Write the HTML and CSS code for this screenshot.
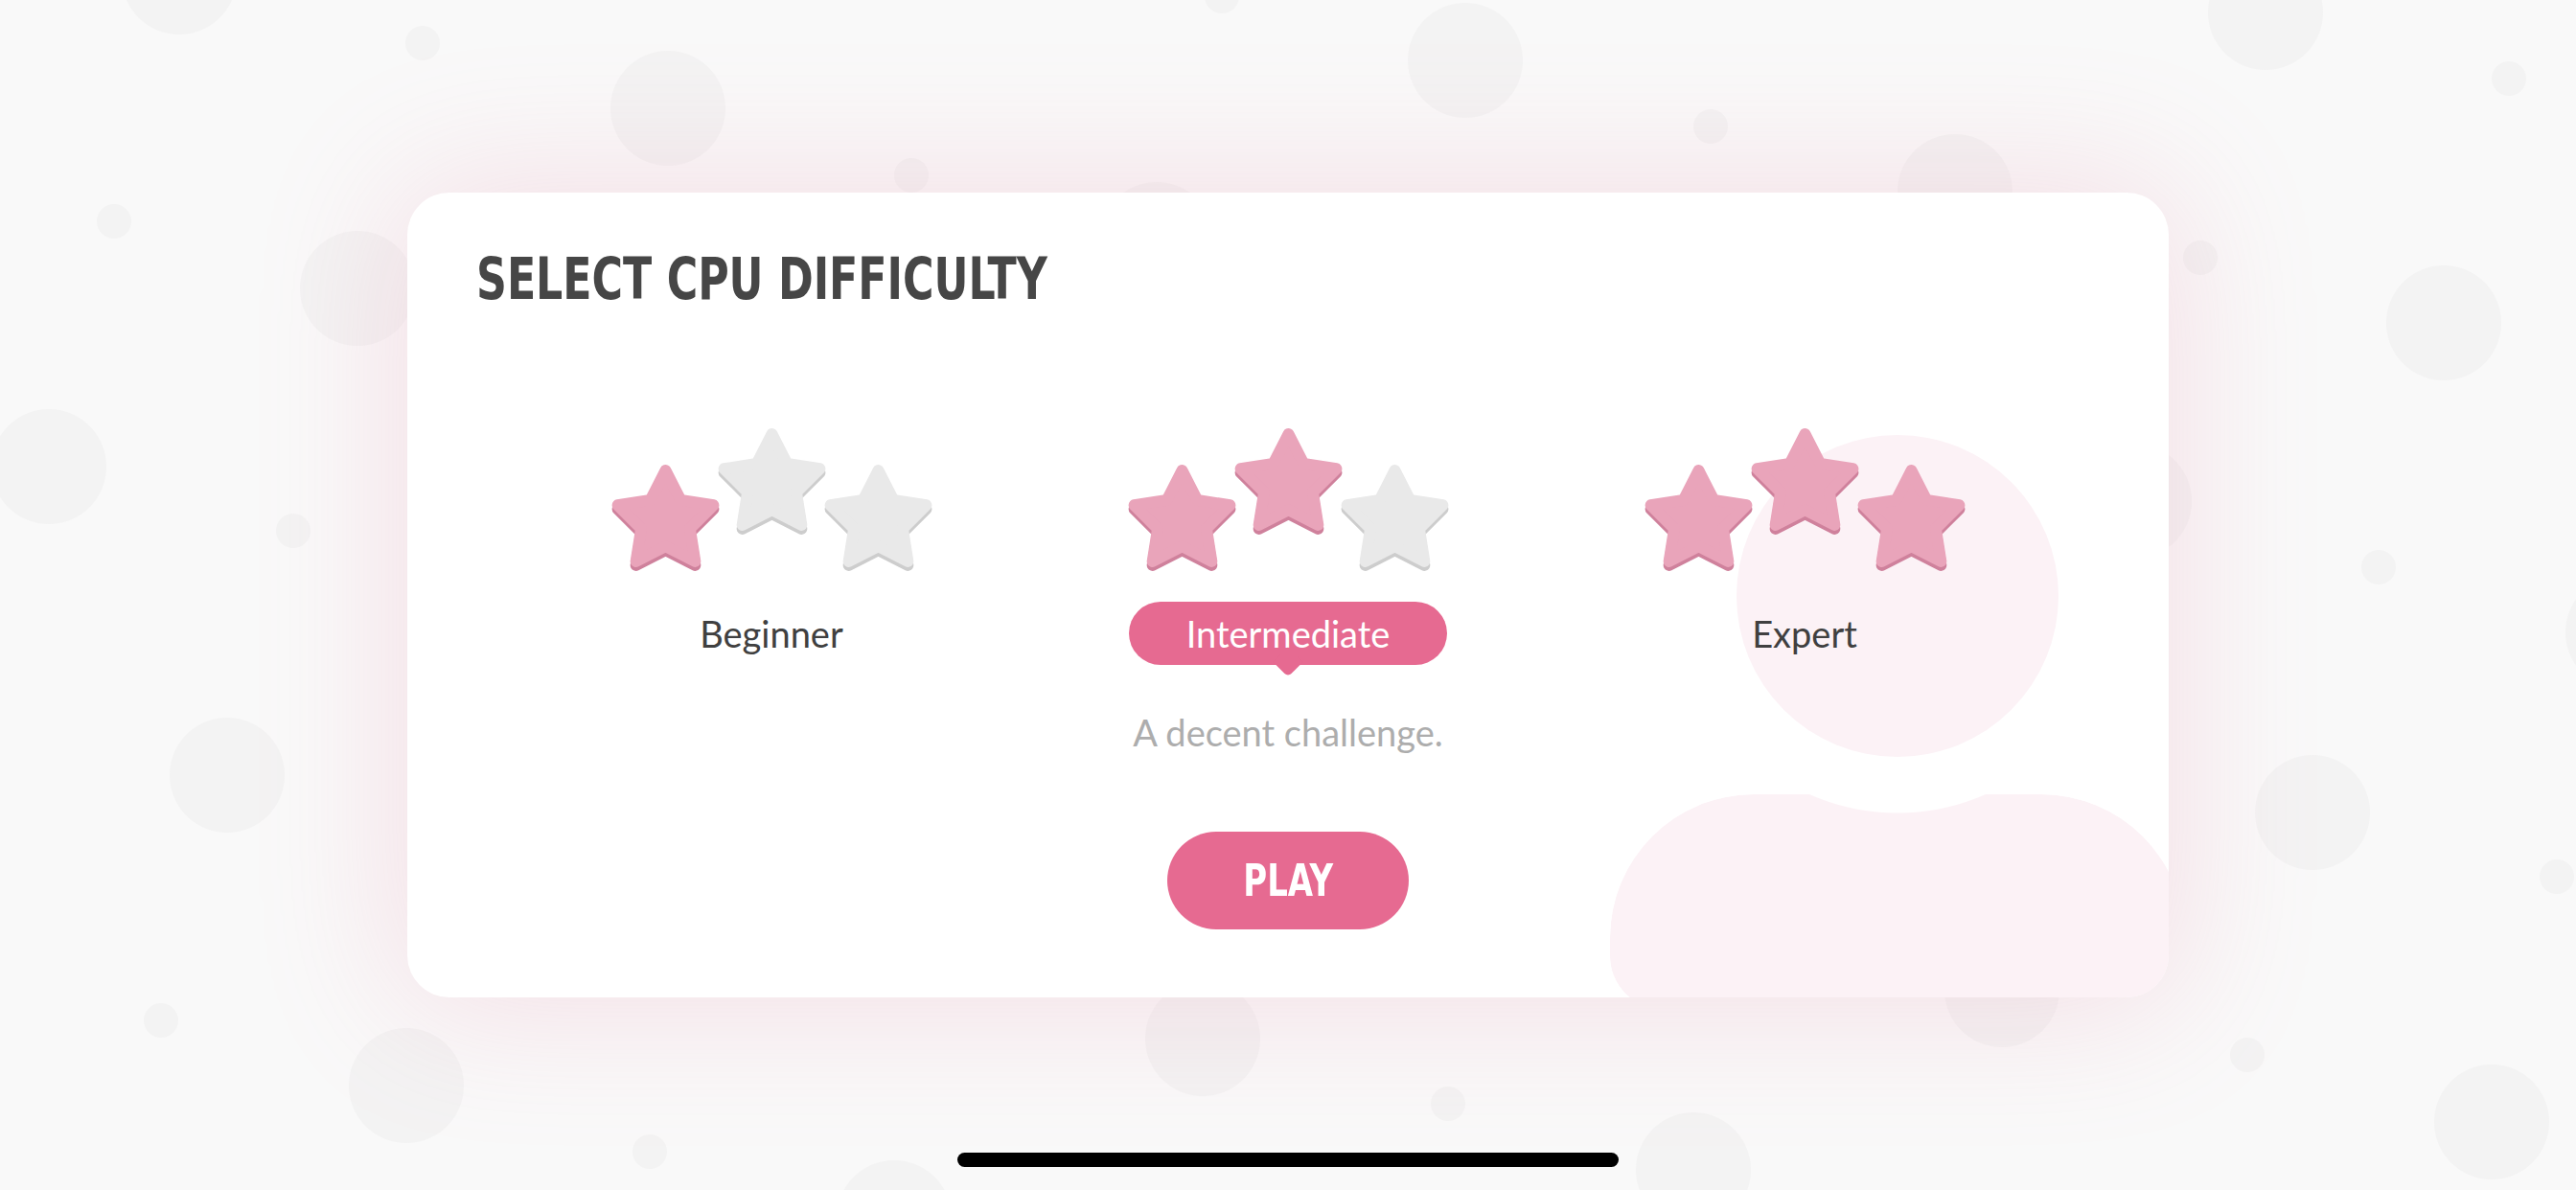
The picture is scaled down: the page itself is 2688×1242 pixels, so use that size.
FILE: index.html
```html
<!DOCTYPE html>
<html lang="en">
<head>
<meta charset="utf-8">
<title>Select CPU Difficulty</title>
<link rel="stylesheet" href="styles.css">
</head>
<body>
<svg class="defs" width="0" height="0" aria-hidden="true">
  <defs>
    <polygon id="starShape" points="57,7 72.87,38.16 107.41,43.62 82.68,68.34 88.15,102.88 57,87 25.85,102.88 31.32,68.34 6.59,43.62 41.13,38.16"/>
  </defs>
</svg>
<main class="card">
  <div class="deco-head"></div>
  <div class="deco-body"></div>
  <div class="content">
    <h1 class="title"><span class="narrow">SELECT CPU DIFFICULTY</span></h1>
    <div class="options">
      <div class="option">
        <div class="stars">
          <svg class="star on" viewBox="0 0 114 113"><use href="#starShape" class="sh" transform="translate(0,4)"/><use href="#starShape" class="fg"/></svg>
          <svg class="star off mid" viewBox="0 0 114 113"><use href="#starShape" class="sh" transform="translate(0,4)"/><use href="#starShape" class="fg"/></svg>
          <svg class="star off" viewBox="0 0 114 113"><use href="#starShape" class="sh" transform="translate(0,4)"/><use href="#starShape" class="fg"/></svg>
        </div>
        <div class="label">Beginner</div>
      </div>
      <div class="option">
        <div class="stars">
          <svg class="star on" viewBox="0 0 114 113"><use href="#starShape" class="sh" transform="translate(0,4)"/><use href="#starShape" class="fg"/></svg>
          <svg class="star on mid" viewBox="0 0 114 113"><use href="#starShape" class="sh" transform="translate(0,4)"/><use href="#starShape" class="fg"/></svg>
          <svg class="star off" viewBox="0 0 114 113"><use href="#starShape" class="sh" transform="translate(0,4)"/><use href="#starShape" class="fg"/></svg>
        </div>
        <div class="label selected">Intermediate</div>
      </div>
      <div class="option">
        <div class="stars">
          <svg class="star on" viewBox="0 0 114 113"><use href="#starShape" class="sh" transform="translate(0,4)"/><use href="#starShape" class="fg"/></svg>
          <svg class="star on mid" viewBox="0 0 114 113"><use href="#starShape" class="sh" transform="translate(0,4)"/><use href="#starShape" class="fg"/></svg>
          <svg class="star on" viewBox="0 0 114 113"><use href="#starShape" class="sh" transform="translate(0,4)"/><use href="#starShape" class="fg"/></svg>
        </div>
        <div class="label">Expert</div>
      </div>
    </div>
    <p class="desc">A decent challenge.</p>
    <div class="actions">
      <button class="play" type="button"><span class="narrow">PLAY</span></button>
    </div>
  </div>
</main>
<div class="home-indicator"></div>
</body>
</html>
```
FILE: styles.css
```css
html, body {
  margin: 0;
  padding: 0;
}

body {
  width: 2688px;
  height: 1242px;
  overflow: hidden;
  position: relative;
  display: flex;
  align-items: center;
  justify-content: center;
  font-family: "Lato", "Open Sans", sans-serif;
  background-color: #f9f9f9;
  background-image:
    radial-gradient(circle at 187px -24px, #f3f3f3 59.5px, transparent 60.5px),
    radial-gradient(circle at 373px 301px, #f3f3f3 59.5px, transparent 60.5px),
    radial-gradient(circle at 51px 487px, #f3f3f3 59.5px, transparent 60.5px),
    radial-gradient(circle at 237px 809px, #f3f3f3 59.5px, transparent 60.5px),
    radial-gradient(circle at 424px 1133px, #f3f3f3 59.5px, transparent 60.5px),
    radial-gradient(circle at 697px 113px, #f3f3f3 59.5px, transparent 60.5px),
    radial-gradient(circle at 1529px 63px, #f3f3f3 59.5px, transparent 60.5px),
    radial-gradient(circle at 1207px 250px, #f3f3f3 59.5px, transparent 60.5px),
    radial-gradient(circle at 2040px 200px, #f3f3f3 59.5px, transparent 60.5px),
    radial-gradient(circle at 2364px 13px, #f3f3f3 59.5px, transparent 60.5px),
    radial-gradient(circle at 2550px 337px, #f3f3f3 59.5px, transparent 60.5px),
    radial-gradient(circle at 2227px 523px, #f3f3f3 59.5px, transparent 60.5px),
    radial-gradient(circle at 2737px 660px, #f3f3f3 59.5px, transparent 60.5px),
    radial-gradient(circle at 2413px 848px, #f3f3f3 59.5px, transparent 60.5px),
    radial-gradient(circle at 2600px 1171px, #f3f3f3 59.5px, transparent 60.5px),
    radial-gradient(circle at 1255px 1084px, #f3f3f3 59.5px, transparent 60.5px),
    radial-gradient(circle at 2089px 1033px, #f3f3f3 59.5px, transparent 60.5px),
    radial-gradient(circle at 933px 1271px, #f3f3f3 59.5px, transparent 60.5px),
    radial-gradient(circle at 1767px 1221px, #f3f3f3 59.5px, transparent 60.5px),
    radial-gradient(circle at 119px 231px, #f3f3f3 17.5px, transparent 18.5px),
    radial-gradient(circle at 306px 554px, #f3f3f3 17.5px, transparent 18.5px),
    radial-gradient(circle at 168px 1065px, #f3f3f3 17.5px, transparent 18.5px),
    radial-gradient(circle at 441px 45px, #f3f3f3 17.5px, transparent 18.5px),
    radial-gradient(circle at 1275px -4px, #f3f3f3 17.5px, transparent 18.5px),
    radial-gradient(circle at 1785px 132px, #f3f3f3 17.5px, transparent 18.5px),
    radial-gradient(circle at 951px 183px, #f3f3f3 17.5px, transparent 18.5px),
    radial-gradient(circle at 2618px 82px, #f3f3f3 17.5px, transparent 18.5px),
    radial-gradient(circle at 2296px 269px, #f3f3f3 17.5px, transparent 18.5px),
    radial-gradient(circle at 2482px 592px, #f3f3f3 17.5px, transparent 18.5px),
    radial-gradient(circle at 2668px 915px, #f3f3f3 17.5px, transparent 18.5px),
    radial-gradient(circle at 2345px 1101px, #f3f3f3 17.5px, transparent 18.5px),
    radial-gradient(circle at 1511px 1152px, #f3f3f3 17.5px, transparent 18.5px),
    radial-gradient(circle at 678px 1202px, #f3f3f3 17.5px, transparent 18.5px);
}

.defs {
  position: absolute;
  width: 0;
  height: 0;
  overflow: hidden;
}

.card {
  position: relative;
  box-sizing: border-box;
  width: 1838px;
  height: 840px;
  padding: 60px 72px 0;
  background: #ffffff;
  border-radius: 44px;
  overflow: hidden;
  box-shadow: 0 0 150px 10px rgba(232, 120, 156, 0.2);
}

.deco-head {
  position: absolute;
  left: 1387px;
  top: 253px;
  width: 336px;
  height: 336px;
  border-radius: 50%;
  background: #fcf2f6;
}

.deco-body {
  position: absolute;
  left: 1255px;
  top: 628px;
  width: 600px;
  height: 224px;
  border-radius: 150px 150px 55px 55px;
  background: #fcf2f6;
  -webkit-mask-image: radial-gradient(circle at 300px -207px, transparent 226px, #000 227px);
  mask-image: radial-gradient(circle at 300px -207px, transparent 226px, #000 227px);
}

.content {
  position: relative;
}

.narrow {
  display: inline-block;
  transform: scaleX(0.82);
}

.title {
  margin: 0;
  font-family: "Liberation Sans Narrow", "DejaVu Sans Condensed", "Liberation Sans", sans-serif;
  font-weight: 700;
  font-size: 60px;
  line-height: 60px;
  color: #464646;
  white-space: nowrap;
}

.title .narrow {
  transform-origin: 0 50%;
}

.options {
  display: grid;
  grid-template-columns: repeat(3, 539px);
  justify-content: center;
  margin-top: 125px;
}

.option {
  display: flex;
  flex-direction: column;
  align-items: center;
}

.stars {
  display: flex;
  align-items: flex-start;
  height: 149px;
}

.star {
  width: 113px;
  height: 112px;
  margin: 38px -1px 0;
  display: block;
}

.star.mid {
  margin-top: 0;
}

.star use {
  stroke-width: 12;
  stroke-linejoin: round;
}

.star.on .sh { fill: #cf819c; stroke: #cf819c; }
.star.on .fg { fill: #e9a4ba; stroke: #e9a4ba; }
.star.off .sh { fill: #cdcdcd; stroke: #cdcdcd; }
.star.off .fg { fill: #e9e9e9; stroke: #e9e9e9; }

.label {
  position: relative;
  margin-top: 33px;
  height: 66px;
  line-height: 66px;
  padding: 0 60px;
  border-radius: 33px;
  font-size: 38px;
  color: #404040;
}

.label.selected {
  background: #e66a91;
  color: #ffffff;
}

.label.selected::after {
  content: "";
  position: absolute;
  left: 50%;
  bottom: -8px;
  width: 22px;
  height: 22px;
  margin-left: -11px;
  background: #e66a91;
  border-radius: 0 0 5px 0;
  transform: rotate(45deg);
}

.desc {
  margin: 47px 0 0;
  text-align: center;
  font-size: 38px;
  line-height: 46px;
  color: #adadad;
}

.actions {
  display: flex;
  justify-content: center;
  margin-top: 81px;
}

.play {
  width: 252px;
  height: 102px;
  border: none;
  border-radius: 51px;
  background: #e66a91;
  color: #ffffff;
  font-family: "Liberation Sans Narrow", "DejaVu Sans Condensed", "Liberation Sans", sans-serif;
  font-weight: 700;
  font-size: 46px;
  padding: 0;
  cursor: pointer;
}

.home-indicator {
  position: absolute;
  left: 999px;
  top: 1203px;
  width: 690px;
  height: 15px;
  border-radius: 8px;
  background: #000000;
}
```
